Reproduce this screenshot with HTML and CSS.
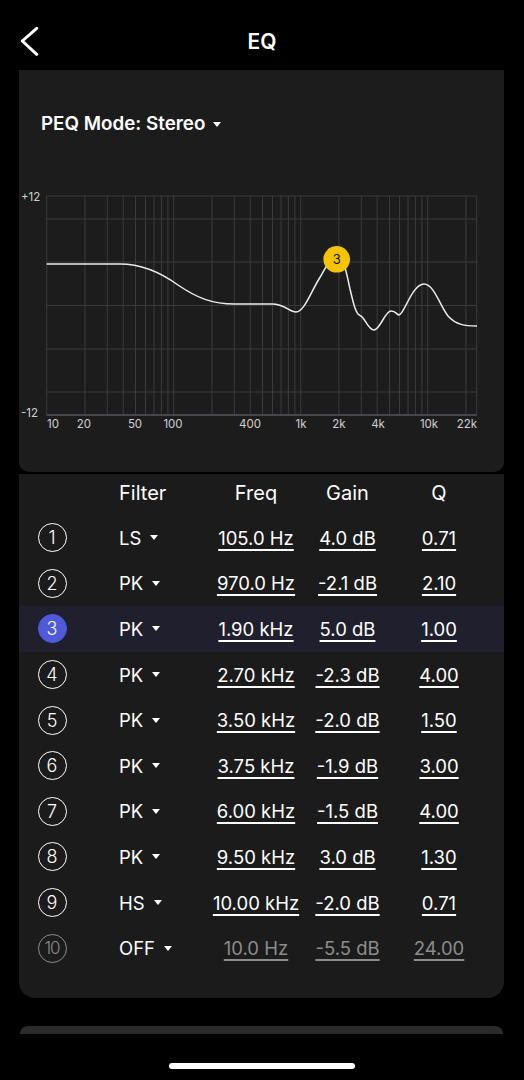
FILE: index.html
```html
<!DOCTYPE html>
<html lang="en">
<head>
    <meta charset="UTF-8">
    <meta name="viewport" content="width=device-width, initial-scale=1.0">
    <title>EQ</title>
    <link rel="stylesheet" href="styles.css">
</head>
<body>
<div class="screen">
    <header class="nav">
        <svg class="back" width="20" height="30" viewBox="0 0 20 30">
            <path d="M17.7 2.3 L3.3 15 L17.7 28.3" fill="none" stroke="#fff" stroke-width="3" stroke-linecap="round" stroke-linejoin="round"/>
        </svg>
        <h1>EQ</h1>
        <span></span>
    </header>

    <section class="graph-card">
        <div class="mode">PEQ Mode: Stereo <span class="caret"></span></div>

        <svg class="graph" width="485" height="250" viewBox="19 185 485 250">
            <g stroke="#3b3b3b" stroke-width="1" fill="none">
                <!-- horizontal grid -->
                <path d="M46.7 196 H476.7 M46.7 219 H476.7 M46.7 262 H476.7 M46.7 305.5 H476.7 M46.7 349 H476.7 M46.7 392 H476.7"/>
                <!-- vertical grid, log scale -->
                <path d="M46.7 196 V415 M84.9 196 V415 M107.3 196 V415 M123.2 196 V415 M135.5 196 V415 M145.5 196 V415 M154 196 V415 M161.4 196 V415 M167.9 196 V415 M173.7 196 V415
                         M211.9 196 V415 M234.3 196 V415 M250.2 196 V415 M262.5 196 V415 M272.5 196 V415 M281 196 V415 M288.4 196 V415 M294.9 196 V415 M300.7 196 V415
                         M338.9 196 V415 M361.3 196 V415 M377.2 196 V415 M389.5 196 V415 M399.5 196 V415 M408 196 V415 M415.4 196 V415 M421.9 196 V415 M427.7 196 V415
                         M465.9 196 V415 M476.7 196 V415"/>
            </g>
            <path d="M46.7 415 H476.7" stroke="#55555e" stroke-width="1.5"/>

            <g class="axis">
                <text x="21" y="201">+12</text>
                <text x="21" y="417">-12</text>
            </g>
            <g class="axis" text-anchor="middle">
                <text x="53" y="428">10</text>
                <text x="84" y="428">20</text>
                <text x="135" y="428">50</text>
                <text x="173" y="428">100</text>
                <text x="250" y="428">400</text>
                <text x="301" y="428">1k</text>
                <text x="339" y="428">2k</text>
                <text x="378" y="428">4k</text>
                <text x="429" y="428">10k</text>
                <text x="467" y="428">22k</text>
            </g>

            <path class="curve" d="M46.7 264 H120
                C140 264 160 272 178 285
                C197 298 212 304 235 304
                H272
                C285 304 289 312 296 312
                C304 312 311 292 319 279
                C327 266 331 255 337 255
                C343 255 346 270 350 289
                C354 306 356 314 360 315.5
                C365 317 368 330 374 330
                C380 330 385 311 391 311
                C396 311 397 315 399 315
                C404 315 412 284 424 284
                C434 284 440 306 448 316
                C456 325 465 326 477 326"/>

            <circle cx="336.7" cy="259.3" r="13.3" fill="#f5c400"/>
            <text class="marker" x="336.7" y="264" text-anchor="middle">3</text>
        </svg>
    </section>

    <section class="table-card">
        <div class="row head">
            <span></span>
            <span class="filter">Filter</span>
            <span class="val">Freq</span>
            <span class="val">Gain</span>
            <span class="val">Q</span>
        </div>

        <div class="row">
            <span class="badge">1</span>
            <span class="filter">LS <i class="caret"></i></span>
            <span class="val"><u>105.0 Hz</u></span>
            <span class="val"><u>4.0 dB</u></span>
            <span class="val"><u>0.71</u></span>
        </div>
        <div class="row">
            <span class="badge">2</span>
            <span class="filter">PK <i class="caret"></i></span>
            <span class="val"><u>970.0 Hz</u></span>
            <span class="val"><u>-2.1 dB</u></span>
            <span class="val"><u>2.10</u></span>
        </div>
        <div class="row selected">
            <span class="badge active">3</span>
            <span class="filter">PK <i class="caret"></i></span>
            <span class="val"><u>1.90 kHz</u></span>
            <span class="val"><u>5.0 dB</u></span>
            <span class="val"><u>1.00</u></span>
        </div>
        <div class="row">
            <span class="badge">4</span>
            <span class="filter">PK <i class="caret"></i></span>
            <span class="val"><u>2.70 kHz</u></span>
            <span class="val"><u>-2.3 dB</u></span>
            <span class="val"><u>4.00</u></span>
        </div>
        <div class="row">
            <span class="badge">5</span>
            <span class="filter">PK <i class="caret"></i></span>
            <span class="val"><u>3.50 kHz</u></span>
            <span class="val"><u>-2.0 dB</u></span>
            <span class="val"><u>1.50</u></span>
        </div>
        <div class="row">
            <span class="badge">6</span>
            <span class="filter">PK <i class="caret"></i></span>
            <span class="val"><u>3.75 kHz</u></span>
            <span class="val"><u>-1.9 dB</u></span>
            <span class="val"><u>3.00</u></span>
        </div>
        <div class="row">
            <span class="badge">7</span>
            <span class="filter">PK <i class="caret"></i></span>
            <span class="val"><u>6.00 kHz</u></span>
            <span class="val"><u>-1.5 dB</u></span>
            <span class="val"><u>4.00</u></span>
        </div>
        <div class="row">
            <span class="badge">8</span>
            <span class="filter">PK <i class="caret"></i></span>
            <span class="val"><u>9.50 kHz</u></span>
            <span class="val"><u>3.0 dB</u></span>
            <span class="val"><u>1.30</u></span>
        </div>
        <div class="row">
            <span class="badge">9</span>
            <span class="filter">HS <i class="caret"></i></span>
            <span class="val"><u>10.00 kHz</u></span>
            <span class="val"><u>-2.0 dB</u></span>
            <span class="val"><u>0.71</u></span>
        </div>
        <div class="row off">
            <span class="badge">10</span>
            <span class="filter">OFF <i class="caret"></i></span>
            <span class="val"><u>10.0 Hz</u></span>
            <span class="val"><u>-5.5 dB</u></span>
            <span class="val"><u>24.00</u></span>
        </div>
    </section>

    <div class="next-card"></div>
    <div class="home-area"><div class="home-bar"></div></div>
</div>
</body>
</html>
```

FILE: styles.css
```css
body {
    margin: 0;
    padding: 0;
    background-color: #000;
    font-family: Inter, "Noto Sans", sans-serif;
    color: #fff;
}
.screen {
    width: 524px;
    height: 1080px;
    background-color: #000;
    overflow: hidden;
    display: flex;
    flex-direction: column;
}

/* top bar */
.nav {
    height: 58px;
    padding-top: 12px;
    display: grid;
    grid-template-columns: 60px 1fr 60px;
    align-items: center;
}
.back {
    margin-left: 19px;
}
.nav h1 {
    margin: 0;
    text-align: center;
    font-size: 21px;
    font-weight: 600;
}

/* graph card */
.graph-card {
    margin: 0 20px 0 19px;
    background-color: #1c1c1c;
    border-radius: 0 0 10px 10px;
    padding: 42px 0 37px 0;
}
.mode {
    padding-left: 22px;
    height: 24px;
    line-height: 24px;
    font-size: 18.8px;
    font-weight: 600;
    display: flex;
    align-items: center;
}
.mode .caret {
    margin-left: 8px;
}
.graph {
    display: block;
    margin-top: 49px;
}
.axis text {
    fill: #d0d0d0;
    font-size: 11.5px;
    font-family: Inter, "Noto Sans", sans-serif;
}
.curve {
    fill: none;
    stroke: #ececec;
    stroke-width: 1.5;
}
.marker {
    fill: #111;
    font-size: 13px;
    font-family: Inter, "Noto Sans", sans-serif;
}

.caret {
    display: inline-block;
    width: 0;
    height: 0;
    border-left: 4.5px solid transparent;
    border-right: 4.5px solid transparent;
    border-top: 5.5px solid #fff;
}

/* filter table */
.table-card {
    margin: 2px 20px 0 19px;
    background-color: #1b1b1b;
    border-radius: 0 0 16px 16px;
    padding-bottom: 27px;
}
.row {
    display: grid;
    grid-template-columns: 66px 125px 92px 91px 92px;
    align-items: center;
    height: 45.6px;
    font-size: 18.5px;
}
.row.head {
    height: 41px;
    padding-bottom: 3px;
    box-sizing: border-box;
    font-size: 20px;
}
.row.selected {
    background-color: #1f1f2e;
}
.filter {
    padding-left: 34px;
    display: flex;
    align-items: center;
}
.filter .caret {
    margin-left: 9px;
}
.val {
    text-align: center;
}
.val u {
    text-decoration-thickness: 1.5px;
    text-underline-offset: 4px;
}
.badge {
    justify-self: center;
    width: 27px;
    height: 27px;
    border: 1.5px solid #fff;
    border-radius: 50%;
    display: flex;
    align-items: center;
    justify-content: center;
    font-size: 18px;
    font-weight: 300;
}
.badge.active {
    background-color: #4f5ad8;
    border-color: #4f5ad8;
}
.off .badge {
    border-color: #8c8c8c;
    color: #8c8c8c;
    font-size: 17px;
    letter-spacing: -1px;
}
.off .val {
    color: #8c8c8c;
}

/* bottom */
.next-card {
    margin: 28px 21px 0 20px;
    height: 8px;
    background-color: #2b2b2b;
    border-radius: 16px 16px 0 0;
}
.home-area {
    height: 46px;
    display: flex;
    justify-content: center;
    padding-top: 29px;
    box-sizing: border-box;
}
.home-bar {
    width: 186px;
    height: 6px;
    border-radius: 3px;
    background-color: #fff;
}
```
